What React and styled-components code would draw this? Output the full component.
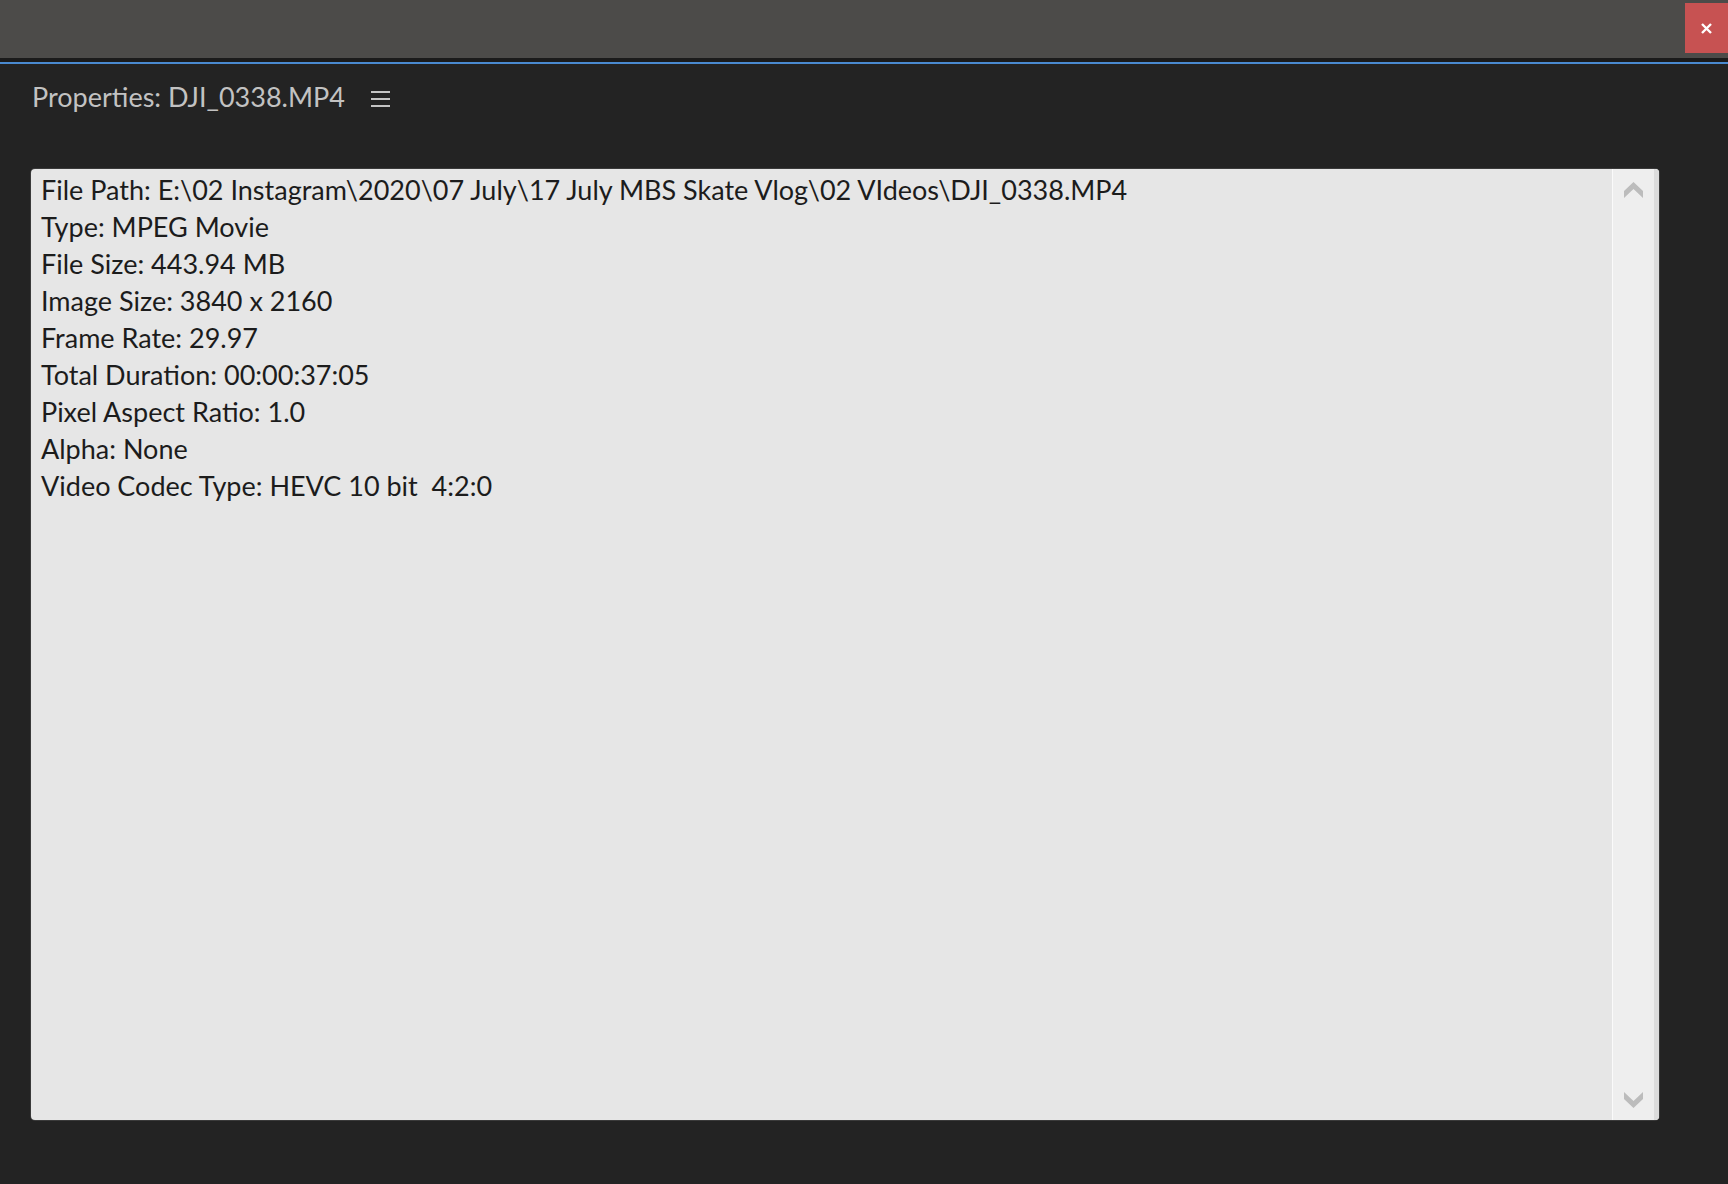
import styled, { createGlobalStyle } from 'styled-components';

const GlobalStyle = createGlobalStyle`
    html, body {
        margin: 0;
        padding: 0;
        background: #232323;
    }
    #root {
        height: 100vh;
    }
`;

const Window = styled.div`
    display: flex;
    flex-direction: column;
    height: 100vh;
    background: #232323;
    font-family: Lato, "Open Sans", sans-serif;
`;

const TitleBar = styled.div`
    display: flex;
    justify-content: flex-end;
    align-items: flex-start;
    height: 58px;
    background: #4c4b49;
    box-sizing: border-box;
    padding-top: 3px;
`;

const CloseButton = styled.button`
    display: flex;
    align-items: center;
    justify-content: center;
    width: 43px;
    height: 50px;
    border: none;
    padding: 0;
    background: #c75252;
    cursor: pointer;
`;

const Separator = styled.div`
    height: 4px;
    background: #1b1b1b;
    border-bottom: 2px solid #4a8ad0;
`;

const Panel = styled.div`
    flex: 1;
    display: flex;
    flex-direction: column;
    padding: 0 69px 64px 31px;
    min-height: 0;
`;

const Header = styled.div`
    display: flex;
    align-items: center;
    height: 64px;
    padding-left: 1px;
    gap: 26px;
`;

const Title = styled.span`
    color: #c2c2c2;
    font-size: 27px;
`;

const MenuIcon = styled.span`
    display: flex;
    flex-direction: column;
    gap: 5px;
    width: 19px;
    margin-top: 6px;
    span {
        height: 2px;
        background: #c4c4c4;
    }
`;

const InfoBox = styled.div`
    flex: 1;
    display: flex;
    margin-top: 41px;
    background: #e6e6e6;
    border-radius: 4px;
    box-shadow: 0 0 0 1px #3a3a3a;
    overflow: hidden;
`;

const InfoList = styled.div`
    flex: 1;
    padding: 2px 10px;
    color: #1c1c1c;
    font-size: 27px;
    line-height: 37px;
    white-space: pre;
`;

const Scrollbar = styled.div`
    display: flex;
    flex-direction: column;
    justify-content: space-between;
    align-items: center;
    width: 41px;
    border-left: 1px solid #fafafa;
    border-right: 5px solid #dcdcdc;
    background: #eeeeee;
    padding: 13px 0 12px;
`;

const Chevron = ({ down }) => (
    <svg width="19" height="16" viewBox="0 0 19 16">
        <polygon
            fill="#bcbcbc"
            points="0,9 9.5,0 19,9 19,16 9.5,7 0,16"
            transform={down ? 'rotate(180 9.5 8)' : undefined}
        />
    </svg>
);

const rows = [
    'File Path: E:\\02 Instagram\\2020\\07 July\\17 July MBS Skate Vlog\\02 VIdeos\\DJI_0338.MP4',
    'Type: MPEG Movie',
    'File Size: 443.94 MB',
    'Image Size: 3840 x 2160',
    'Frame Rate: 29.97',
    'Total Duration: 00:00:37:05',
    'Pixel Aspect Ratio: 1.0',
    'Alpha: None',
    'Video Codec Type: HEVC 10 bit  4:2:0',
];

function App() {
    return (
        <Window>
            <GlobalStyle />
            <TitleBar>
                <CloseButton aria-label="Close">
                    <svg width="11" height="11" viewBox="0 0 11 11">
                        <path d="M1 1 L10 10 M10 1 L1 10" stroke="#fff" strokeWidth="2.4" />
                    </svg>
                </CloseButton>
            </TitleBar>
            <Separator />
            <Panel>
                <Header>
                    <Title>Properties: DJI_0338.MP4</Title>
                    <MenuIcon><span /><span /><span /></MenuIcon>
                </Header>
                <InfoBox>
                    <InfoList>
                        {rows.map((r) => <div key={r}>{r}</div>)}
                    </InfoList>
                    <Scrollbar>
                        <Chevron />
                        <Chevron down />
                    </Scrollbar>
                </InfoBox>
            </Panel>
        </Window>
    );
}

export default App;
